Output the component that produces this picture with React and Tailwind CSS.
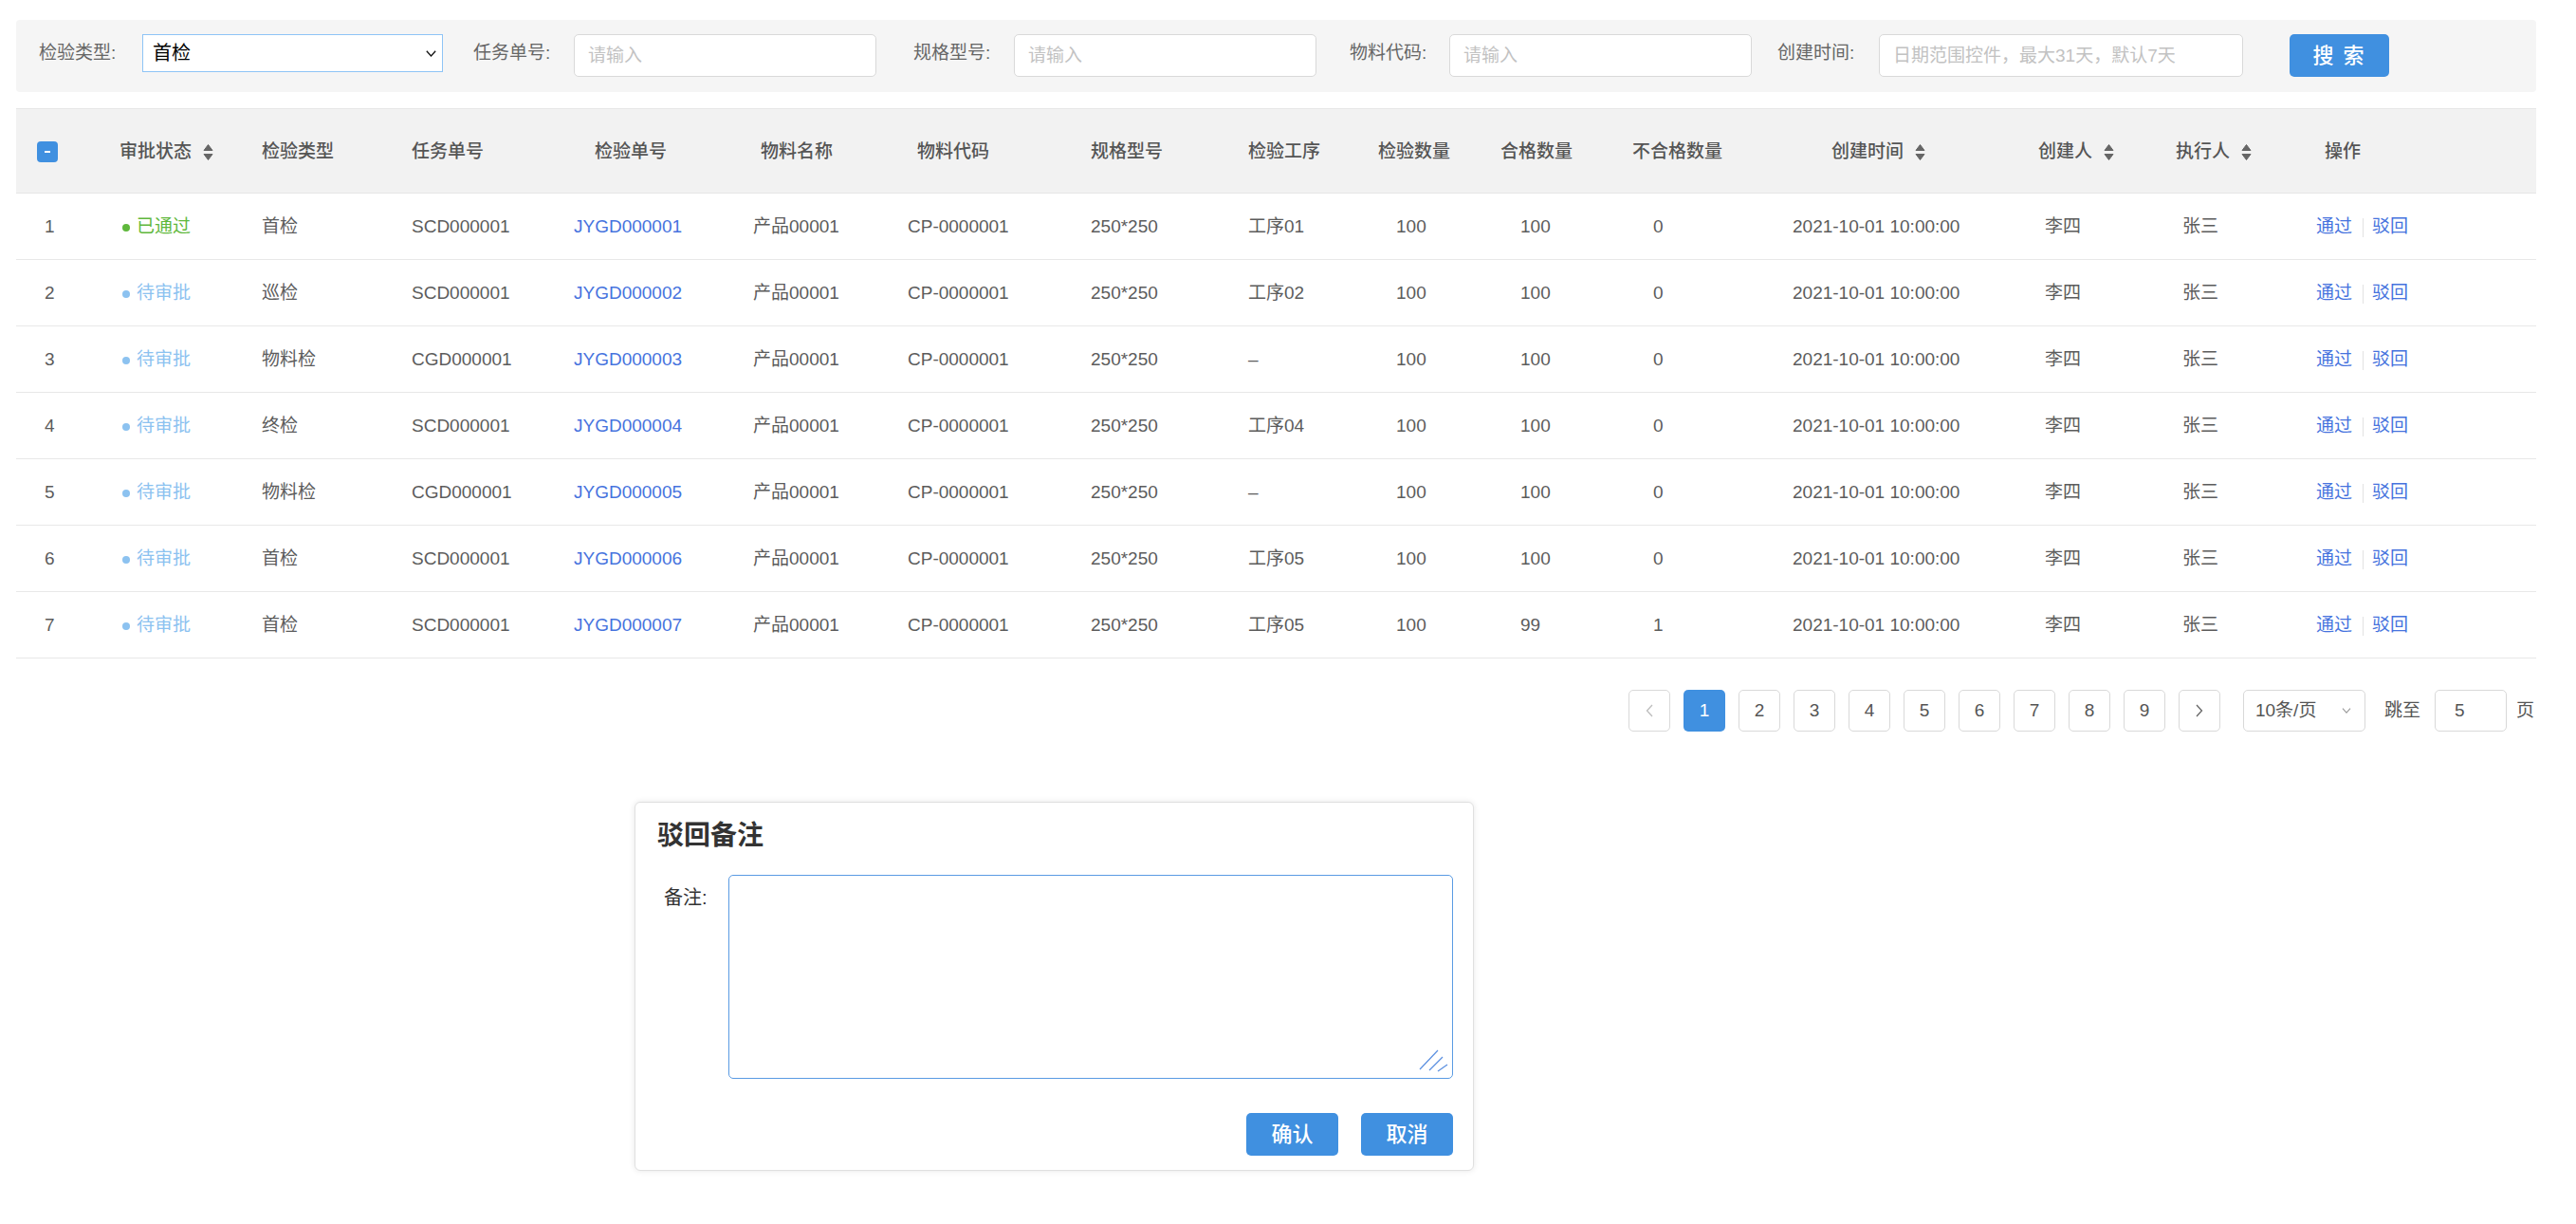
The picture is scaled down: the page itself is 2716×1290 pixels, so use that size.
import React from "react";

const cols = [
  { w: "w-[83px]", hp: "pl-[22px]", dp: "pl-[30px]" },
  { w: "w-[160px]", hp: "pl-[26px]", dp: "pl-[29px]" },
  { w: "w-[160px]", hp: "pl-[16px]", dp: "pl-[16px]" },
  { w: "w-[180px]", hp: "pl-[14px]", dp: "pl-[14px]" },
  { w: "w-[170px]", hp: "pl-[27px]", dp: "pl-[5px]" },
  { w: "w-[170px]", hp: "pl-[32px]", dp: "pl-[24px]" },
  { w: "w-[190px]", hp: "pl-[27px]", dp: "pl-[17px]" },
  { w: "w-[170px]", hp: "pl-[20px]", dp: "pl-[20px]" },
  { w: "w-[130px]", hp: "pl-[16px]", dp: "pl-[16px]" },
  { w: "w-[130px]", hp: "pl-[23px]", dp: "pl-[42px]" },
  { w: "w-[140px]", hp: "pl-[22px]", dp: "pl-[43px]" },
  { w: "w-[160px]", hp: "pl-[21px]", dp: "pl-[43px]" },
  { w: "w-[260px]", hp: "pl-[71px]", dp: "pl-[30px]" },
  { w: "w-[150px]", hp: "pl-[29px]", dp: "pl-[36px]" },
  { w: "w-[150px]", hp: "pl-[24px]", dp: "pl-[31px]" },
  { w: "w-[254px]", hp: "pl-[31px]", dp: "pl-[22px]" },
];

const headers = [
  null,
  { t: "审批状态", sort: true },
  { t: "检验类型" },
  { t: "任务单号" },
  { t: "检验单号" },
  { t: "物料名称" },
  { t: "物料代码" },
  { t: "规格型号" },
  { t: "检验工序" },
  { t: "检验数量" },
  { t: "合格数量" },
  { t: "不合格数量" },
  { t: "创建时间", sort: true },
  { t: "创建人", sort: true },
  { t: "执行人", sort: true },
  { t: "操作" },
];

const rows = [
  { n: 1, s: "已通过", type: "首检", task: "SCD000001", no: "JYGD000001", proc: "工序01", q: "100", ok: "100", bad: "0" },
  { n: 2, s: "待审批", type: "巡检", task: "SCD000001", no: "JYGD000002", proc: "工序02", q: "100", ok: "100", bad: "0" },
  { n: 3, s: "待审批", type: "物料检", task: "CGD000001", no: "JYGD000003", proc: "–", q: "100", ok: "100", bad: "0" },
  { n: 4, s: "待审批", type: "终检", task: "SCD000001", no: "JYGD000004", proc: "工序04", q: "100", ok: "100", bad: "0" },
  { n: 5, s: "待审批", type: "物料检", task: "CGD000001", no: "JYGD000005", proc: "–", q: "100", ok: "100", bad: "0" },
  { n: 6, s: "待审批", type: "首检", task: "SCD000001", no: "JYGD000006", proc: "工序05", q: "100", ok: "100", bad: "0" },
  { n: 7, s: "待审批", type: "首检", task: "SCD000001", no: "JYGD000007", proc: "工序05", q: "100", ok: "99", bad: "1" },
];

function SortIcon() {
  return (
    <svg width="11" height="19" viewBox="0 0 11 19" className="ml-[12px] shrink-0">
      <path d="M5.5 1.5 L10 7.5 L1 7.5 Z" fill="#666" stroke="#666" strokeWidth="1" strokeLinejoin="round" />
      <path d="M5.5 17.5 L10 11.5 L1 11.5 Z" fill="#666" stroke="#666" strokeWidth="1" strokeLinejoin="round" />
    </svg>
  );
}

function ChevronDown({ color = "#111", w = 11, h = 7 }) {
  return (
    <svg width={w} height={h} viewBox="0 0 11 7" className="shrink-0">
      <polyline points="0.8,0.8 5.5,6 10.2,0.8" fill="none" stroke={color} strokeWidth="1.3" />
    </svg>
  );
}

function Label({ className, children }) {
  return (
    <div className={`flex h-[40px] shrink-0 items-center text-[#666] ${className}`}>{children}</div>
  );
}

function TextInput({ className, placeholder }) {
  return (
    <input
      className={`h-[45px] shrink-0 rounded-[5px] border border-[#d9d9d9] bg-white pl-[14px] text-[19px] text-[#333] outline-none placeholder:text-[#c2c2c2] ${className}`}
      placeholder={placeholder}
    />
  );
}

function PageBtn({ active, children }) {
  return (
    <div
      className={
        active
          ? "flex h-[44px] w-[44px] items-center justify-center rounded-[5px] bg-[#4090e0] text-white"
          : "flex h-[44px] w-[44px] items-center justify-center rounded-[5px] border border-[#d9d9d9] bg-white text-[#555]"
      }
    >
      {children}
    </div>
  );
}

export default function App() {
  return (
    <div className="min-h-screen bg-white pl-[17px] pt-[21px] font-['Liberation_Sans','Noto_Sans_CJK_SC',sans-serif]">
      <div className="w-[2657px]">
        {/* Filter bar */}
        <div className="flex h-[76px] items-start rounded-[4px] bg-[#f5f5f5] pl-[24px] pt-[15px] text-[19px]">
          <Label className="w-[109px]">检验类型:</Label>
          <div className="flex h-[40px] w-[317px] shrink-0 items-center justify-between border border-[#8ec4f6] bg-white pl-[10px] pr-[6px] text-[20px] text-black">
            <span>首检</span>
            <ChevronDown />
          </div>
          <Label className="ml-[32px] w-[106px]">任务单号:</Label>
          <TextInput className="w-[319px]" placeholder="请输入" />
          <Label className="ml-[39px] w-[106px]">规格型号:</Label>
          <TextInput className="w-[319px]" placeholder="请输入" />
          <Label className="ml-[35px] w-[105px]">物料代码:</Label>
          <TextInput className="w-[319px]" placeholder="请输入" />
          <Label className="ml-[27px] w-[107px]">创建时间:</Label>
          <TextInput className="w-[384px]" placeholder="日期范围控件，最大31天，默认7天" />
          <button className="ml-[49px] h-[45px] w-[105px] shrink-0 rounded-[5px] bg-[#4090e0] text-[22px] font-medium tracking-[2px] text-white">
            搜 索
          </button>
        </div>

        {/* Table */}
        <div className="mt-[17px]">
          <div className="flex h-[90px] border-y border-[#e6e6e6] bg-[#f2f2f2] pt-[2px] text-[19px] font-medium text-[#555]">
            {cols.map((c, i) => (
              <div key={i} className={`flex shrink-0 items-center ${c.w} ${c.hp}`}>
                {i === 0 ? (
                  <div className="flex h-[22px] w-[22px] items-center justify-center rounded-[4px] bg-[#4090e0]">
                    <div className="h-[2px] w-[6px] bg-white" />
                  </div>
                ) : (
                  <>
                    <span>{headers[i].t}</span>
                    {headers[i].sort && <SortIcon />}
                  </>
                )}
              </div>
            ))}
          </div>
          {rows.map((r) => {
            const cells = [
              <span>{r.n}</span>,
              <span className="flex items-center">
                <span
                  className={
                    r.s === "已通过"
                      ? "h-[8px] w-[8px] rounded-full bg-[#5fb83c]"
                      : "h-[8px] w-[8px] rounded-full bg-[#8cc2f0]"
                  }
                />
                <span className={r.s === "已通过" ? "ml-[7px] text-[#5fb83c]" : "ml-[7px] text-[#8cc2f0]"}>{r.s}</span>
              </span>,
              <span>{r.type}</span>,
              <span>{r.task}</span>,
              <span className="text-[#4673de]">{r.no}</span>,
              <span>产品00001</span>,
              <span>CP-0000001</span>,
              <span>250*250</span>,
              <span>{r.proc}</span>,
              <span>{r.q}</span>,
              <span>{r.ok}</span>,
              <span>{r.bad}</span>,
              <span>2021-10-01 10:00:00</span>,
              <span>李四</span>,
              <span>张三</span>,
              <span className="flex items-center text-[#4673de]">
                <span>通过</span>
                <span className="ml-[11px] mr-[9px] h-[20px] w-px bg-[#e2e2e2]" />
                <span>驳回</span>
              </span>,
            ];
            return (
              <div key={r.n} className="flex h-[70px] border-b border-[#e8e8e8] pt-[2px] text-[19px] text-[#5c5c5c]">
                {cols.map((c, i) => (
                  <div key={i} className={`flex shrink-0 items-center ${c.w} ${c.dp}`}>
                    {cells[i]}
                  </div>
                ))}
              </div>
            );
          })}
        </div>

        {/* Pagination */}
        <div className="mt-[33px] flex items-center justify-end pr-[2px] text-[19px] text-[#555]">
          <div className="flex gap-[14px]">
            <PageBtn>
              <svg width="8" height="14" viewBox="0 0 8 14">
                <polyline points="7,1 1.5,7 7,13" fill="none" stroke="#bdbdbd" strokeWidth="1.3" />
              </svg>
            </PageBtn>
            {[1, 2, 3, 4, 5, 6, 7, 8, 9].map((p) => (
              <PageBtn key={p} active={p === 1}>
                {p}
              </PageBtn>
            ))}
            <PageBtn>
              <svg width="8" height="14" viewBox="0 0 8 14">
                <polyline points="1,1 6.5,7 1,13" fill="none" stroke="#666" strokeWidth="1.3" />
              </svg>
            </PageBtn>
          </div>
          <div className="ml-[24px] flex h-[44px] w-[129px] items-center justify-between rounded-[5px] border border-[#d9d9d9] pl-[12px] pr-[14px]">
            <span>10条/页</span>
            <ChevronDown color="#999" w={10} h={6} />
          </div>
          <span className="ml-[20px]">跳至</span>
          <div className="ml-[15px] flex h-[44px] w-[76px] items-center rounded-[5px] border border-[#d9d9d9] pl-[20px]">5</div>
          <span className="ml-[10px]">页</span>
        </div>

        {/* Dialog */}
        <div className="ml-[652px] mt-[74px] w-[885px] rounded-[6px] border border-[#e0e0e0] bg-white pb-[15px] pl-[23px] pr-[21px] pt-[15px] shadow-[0_0_6px_rgba(0,0,0,0.10)]">
          <div className="h-[40px] text-[28px] font-bold leading-[40px] text-[#333]">驳回备注</div>
          <div className="mt-[21px] flex">
            <div className="w-[75px] shrink-0 pl-[7px] text-[20px] leading-[48px] text-[#333]">备注:</div>
            <div className="relative">
              <textarea className="block h-[215px] w-[764px] resize-none rounded-[5px] border border-[#5a9be3] bg-white outline-none" />
              <svg width="33" height="26" viewBox="0 0 33 26" className="absolute bottom-[6px] right-[4px]">
                <line x1="2" y1="22" x2="21" y2="2" stroke="#5a8fe0" strokeWidth="1.2" />
                <line x1="12" y1="23" x2="26" y2="9" stroke="#5a8fe0" strokeWidth="1.2" />
                <line x1="21" y1="24" x2="31" y2="17" stroke="#5a8fe0" strokeWidth="1.2" />
              </svg>
            </div>
          </div>
          <div className="mt-[36px] flex justify-end gap-[24px]">
            <button className="h-[45px] w-[97px] rounded-[5px] bg-[#4090e0] text-[22px] font-medium text-white">确认</button>
            <button className="h-[45px] w-[97px] rounded-[5px] bg-[#4090e0] text-[22px] font-medium text-white">取消</button>
          </div>
        </div>
      </div>
    </div>
  );
}
